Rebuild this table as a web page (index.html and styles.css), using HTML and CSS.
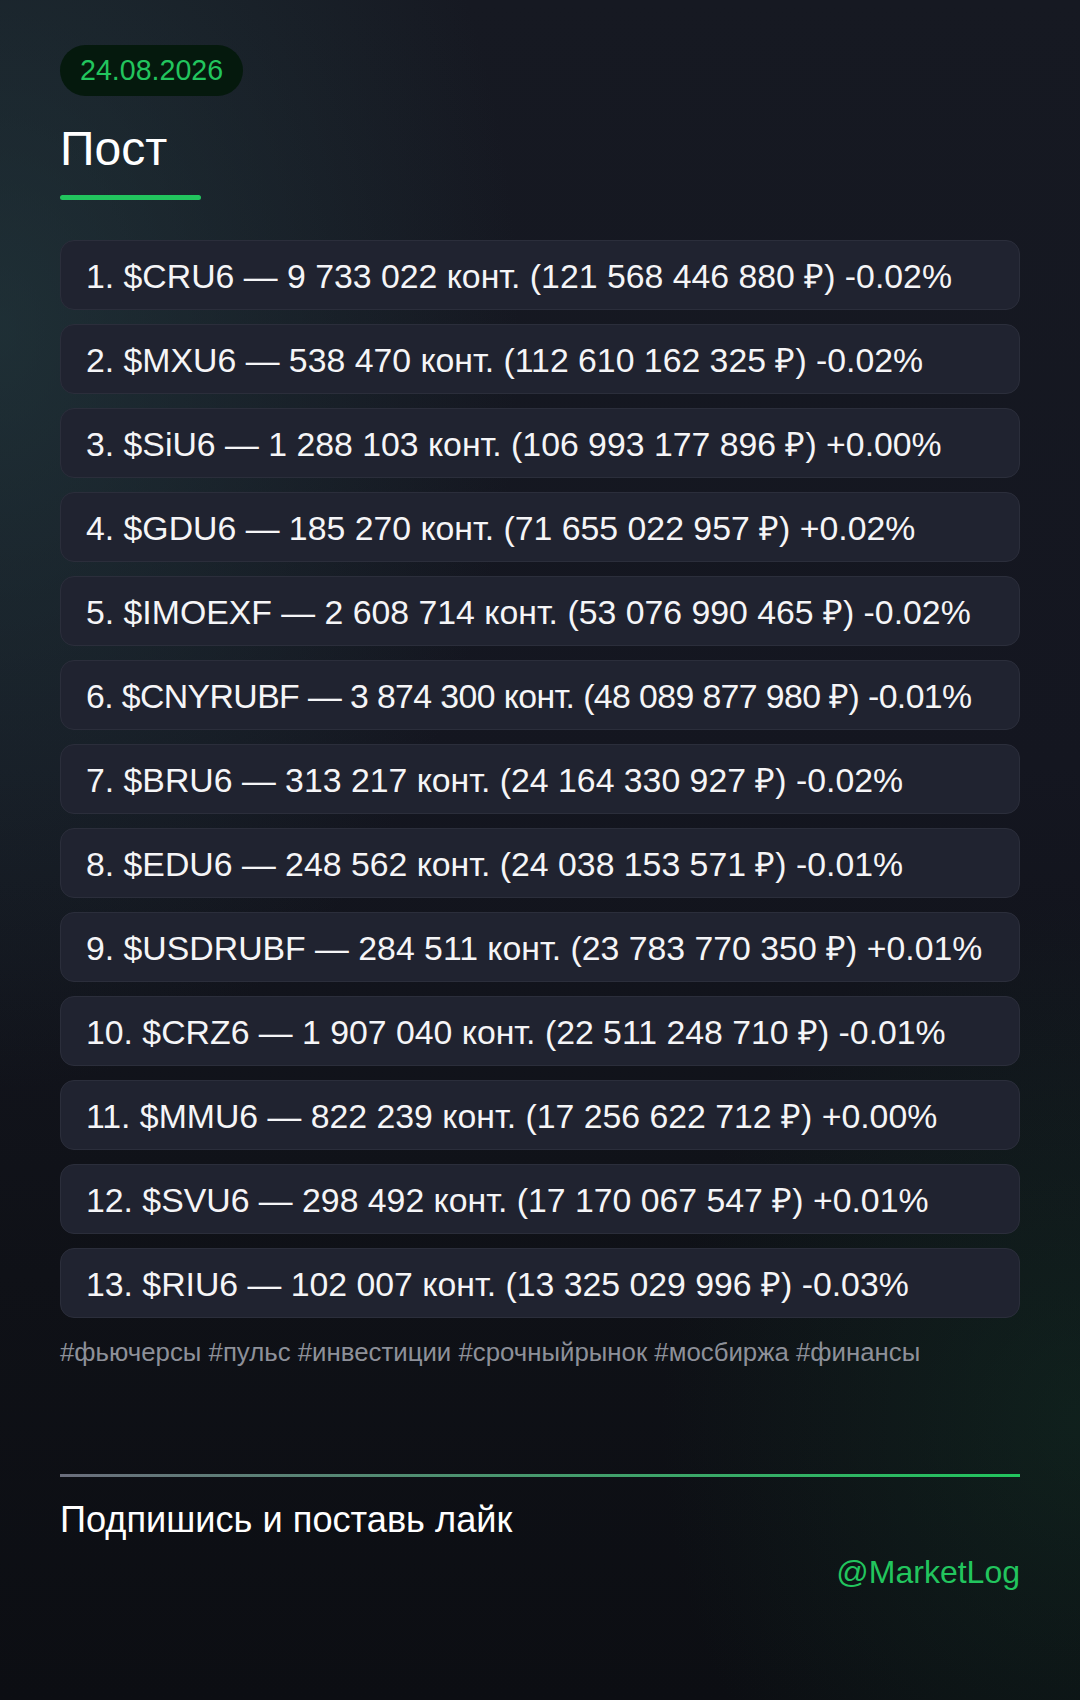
FILE: index.html
```html
<!DOCTYPE html>
<html lang="ru">
<head>
<meta charset="utf-8">
<title>Пост</title>
<link rel="stylesheet" href="styles.css">
</head>
<body>
<main class="page">
  <div class="date">24.08.2026</div>
  <h1 class="title">Пост</h1>
  <div class="accent"></div>
  <ol class="list">
    <li class="item">1. $CRU6 — 9 733 022 конт. (121 568 446 880 ₽) -0.02%</li>
    <li class="item">2. $MXU6 — 538 470 конт. (112 610 162 325 ₽) -0.02%</li>
    <li class="item">3. $SiU6 — 1 288 103 конт. (106 993 177 896 ₽) +0.00%</li>
    <li class="item">4. $GDU6 — 185 270 конт. (71 655 022 957 ₽) +0.02%</li>
    <li class="item">5. $IMOEXF — 2 608 714 конт. (53 076 990 465 ₽) -0.02%</li>
    <li class="item item--tight">6. $CNYRUBF — 3 874 300 конт. (48 089 877 980 ₽) -0.01%</li>
    <li class="item">7. $BRU6 — 313 217 конт. (24 164 330 927 ₽) -0.02%</li>
    <li class="item">8. $EDU6 — 248 562 конт. (24 038 153 571 ₽) -0.01%</li>
    <li class="item">9. $USDRUBF — 284 511 конт. (23 783 770 350 ₽) +0.01%</li>
    <li class="item">10. $CRZ6 — 1 907 040 конт. (22 511 248 710 ₽) -0.01%</li>
    <li class="item">11. $MMU6 — 822 239 конт. (17 256 622 712 ₽) +0.00%</li>
    <li class="item">12. $SVU6 — 298 492 конт. (17 170 067 547 ₽) +0.01%</li>
    <li class="item">13. $RIU6 — 102 007 конт. (13 325 029 996 ₽) -0.03%</li>
  </ol>
  <p class="tags">#фьючерсы #пульс #инвестиции #срочныйрынок #мосбиржа #финансы</p>
  <footer class="footer">
    <div class="divider"></div>
    <p class="cta">Подпишись и поставь лайк</p>
    <p class="handle">@MarketLog</p>
  </footer>
</main>
</body>
</html>
```

FILE: styles.css
```css
* { box-sizing: border-box; }

html, body {
  margin: 0;
  padding: 0;
}

body {
  width: 1080px;
  min-height: 1700px;
  font-family: "Liberation Sans", Arial, sans-serif;
  color: #f3f4f6;
  background-color: #0e1015;
  background-image:
    radial-gradient(ellipse 520px 760px at 0px 330px, rgba(38, 66, 70, 0.55), rgba(38, 66, 70, 0) 100%),
    radial-gradient(ellipse 420px 520px at 1080px 1420px, rgba(20, 70, 45, 0.30), rgba(20, 70, 45, 0) 100%),
    linear-gradient(180deg, #161922 0%, #141620 45%, #0f1117 75%, #0c0e13 100%);
}

.page {
  padding: 45px 60px 0;
  display: flex;
  flex-direction: column;
  align-items: flex-start;
}

.date {
  height: 51px;
  padding: 0 20px;
  border-radius: 26px;
  background: #05190d;
  color: #22c55e;
  font-size: 28.6px;
  display: flex;
  align-items: center;
}

.title {
  margin: 25px 0 0;
  font-size: 48px;
  line-height: 55px;
  font-weight: 400;
  color: #ffffff;
}

.accent {
  margin-top: 19px;
  width: 141px;
  height: 5px;
  border-radius: 3px;
  background: #22c55e;
}

.list {
  list-style: none;
  margin: 40px 0 0;
  padding: 0;
  width: 100%;
  display: flex;
  flex-direction: column;
  gap: 14px;
}

.item {
  height: 70px;
  padding: 0 25px;
  display: flex;
  align-items: center;
  background: #202330;
  border: 1px solid #2b2e3b;
  border-radius: 14px;
  font-size: 33.8px;
  color: #f5f5f7;
  white-space: nowrap;
}

.item--tight {
  letter-spacing: -0.6px;
}

.tags {
  margin: 20px 0 0;
  font-size: 25.8px;
  color: #8d9099;
}

.footer {
  width: 100%;
  margin-top: 107px;
  display: flex;
  flex-direction: column;
}

.divider {
  height: 3px;
  width: 100%;
  background: linear-gradient(90deg, #6b6e7d 0%, #22c55e 100%);
}

.cta {
  margin: 22px 0 0;
  font-size: 36.2px;
  color: #ffffff;
}

.handle {
  margin: 13px 0 0;
  align-self: flex-end;
  font-size: 32px;
  color: #22c55e;
}
```
